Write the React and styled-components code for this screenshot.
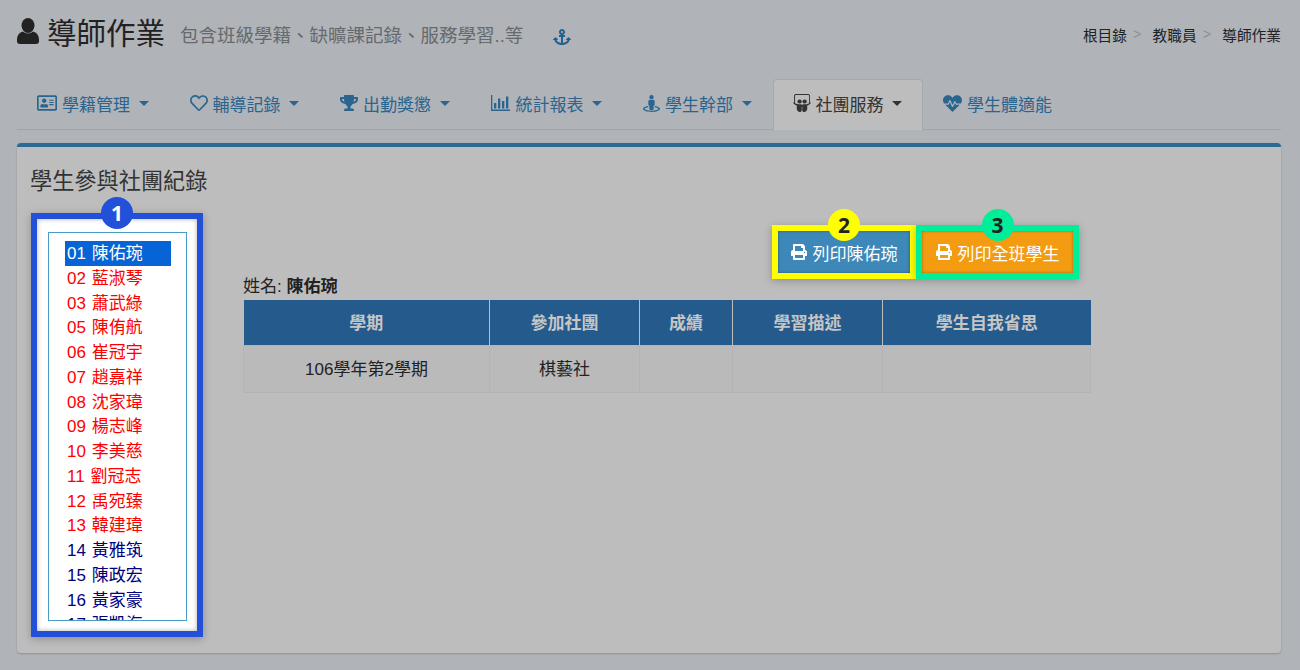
import React from 'react';
import styled, { createGlobalStyle } from 'styled-components';
import {
  FaAnchor, FaRegAddressCard, FaRegHeart, FaTrophy, FaStreetView, FaSlideshare, FaHeartbeat, FaPrint,
} from 'react-icons/fa';

const GlobalStyle = createGlobalStyle`
  html, body { margin: 0; padding: 0; height: 100%; overflow: hidden; }
  body {
    background: #b0b3b8;
    color: #222;
    font-family: "Liberation Sans", "Noto Sans CJK TC", sans-serif;
  }
`;

const Page = styled.div`
  width: 1300px;
  height: 670px;
  padding: 0 19px 0 17px;
  box-sizing: border-box;
  overflow: hidden;
`;

const Header = styled.header`
  display: flex;
  align-items: flex-start;
  justify-content: space-between;
  height: 79px;
`;

const TitleRow = styled.div`
  display: flex;
  align-items: center;
  height: 62px;
`;

const Title = styled.h1`
  margin: -1px 0 0 8px;
  font-size: 29.5px;
  font-weight: 400;
  color: #222;
`;

const Subtitle = styled.span`
  margin: 5px 0 0 15px;
  font-size: 18.5px;
  color: #666a6e;
`;

const AnchorLink = styled.span`
  display: flex;
  margin: 12px 0 0 30px;
  color: #22608f;
`;

const Breadcrumb = styled.div`
  display: flex;
  align-items: center;
  height: 68px;
  font-size: 14.7px;
  color: #222;
`;

const Sep = styled.span`
  margin: 0 11px 0 6px;
  color: #8e9094;
`;

const TabBar = styled.nav`
  display: flex;
  height: 51px;
  border-bottom: 1px solid #a2a4a6;
  box-sizing: border-box;
`;

const Tab = styled.div`
  display: flex;
  align-items: center;
  gap: 5px;
  height: 51px;
  padding: 0 20px 4px 19px;
  box-sizing: border-box;
  font-size: 17px;
  color: ${p => (p.$active ? '#333' : '#2a658f')};
  background: ${p => (p.$active ? '#bdbdbd' : 'transparent')};
  border: 1px solid ${p => (p.$active ? '#a6a8aa' : 'transparent')};
  border-bottom: 0;
  border-radius: 4px 4px 0 0;
`;

const Caret = styled.i`
  width: 0;
  height: 0;
  margin-left: 3.5px;
  border-top: 5px solid currentColor;
  border-left: 5px solid transparent;
  border-right: 5px solid transparent;
`;

const Panel = styled.main`
  height: 510px;
  margin-top: 13px;
  padding: 21px 14px 0;
  box-sizing: border-box;
  background: #bdbdbd;
  border-top: 4px solid #2a6a94;
  border-radius: 4px;
  box-shadow: 0 1px 2px rgba(0, 0, 0, .2);
`;

const PanelTitle = styled.h2`
  margin: 0 0 0 -1px;
  height: 28px;
  line-height: 28px;
  font-size: 22.2px;
  font-weight: 400;
  color: #333;
`;

const Columns = styled.div`
  display: flex;
  margin-top: 17px;
`;

const Highlight = styled.div`
  position: relative;
  box-sizing: border-box;
  border: 6px solid ${p => p.$color};
  box-shadow: 0 2px 8px rgba(0, 0, 0, .25);
`;

const Badge = styled.span`
  position: absolute;
  top: -22px;
  left: 50%;
  margin-left: -16px;
  width: 32px;
  height: 32px;
  border-radius: 50%;
  display: flex;
  align-items: center;
  justify-content: center;
  font-family: "Open Sans", sans-serif;
  font-size: 21px;
  font-weight: 700;
  background: ${p => p.$color};
  color: ${p => p.$text};
  z-index: 2;
`;

const ListFrame = styled(Highlight)`
  width: 172px;
  height: 424px;
  padding: 13px 10px 13px 11px;
  background: #fff;
  box-shadow: 0 2px 8px rgba(0, 0, 0, .25), inset 0 0 5px rgba(0, 0, 0, .3);
`;

const StudentList = styled.ul`
  height: 389px;
  margin: 0;
  padding: 8px 15px 0 16px;
  box-sizing: border-box;
  list-style: none;
  overflow: hidden;
  background: #fff;
  border: 1px solid #4a9cc8;
`;

const Student = styled.li`
  height: 24.75px;
  line-height: 25px;
  padding-left: 2px;
  font-size: 17px;
  word-spacing: 1px;
  white-space: nowrap;
  color: ${p => (p.$selected ? '#fff' : p.$done ? '#f00' : '#000080')};
  background: ${p => (p.$selected ? '#0764d6' : 'transparent')};
`;

const Content = styled.section`
  width: 848px;
  margin-left: 40px;
`;

const Actions = styled.div`
  display: flex;
  justify-content: flex-end;
  margin: 12px 12px 0 0;
`;

const PrintButton = styled.button`
  display: flex;
  align-items: center;
  justify-content: center;
  gap: 6px;
  width: 100%;
  height: 100%;
  padding: 0;
  border: 0;
  font-family: "Noto Sans CJK TC", sans-serif;
  font-size: 17px;
  color: #fff;
  background: ${p => p.$color};
  box-shadow: inset 0 0 3px rgba(0, 0, 0, .35);
`;

const ButtonFrame = styled(Highlight)`
  width: ${p => p.$width}px;
  height: 54px;
`;

const NameLine = styled.div`
  height: 21px;
  line-height: 15px;
  font-size: 17px;
  color: #222;
`;

const Table = styled.table`
  width: 847px;
  border-collapse: collapse;
  table-layout: fixed;
  font-size: 17px;
`;

const Th = styled.th`
  height: 42px;
  padding: 0 0 3px;
  background: #255b8c;
  color: #c6c6c6;
  font-weight: 700;
  border: 1px solid #bdbdbd;
  border-width: 0 1px;
  &:first-child { border-left: 0; }
  &:last-child { border-right: 0; }
`;

const Td = styled.td`
  height: 43px;
  padding: 0 0 3px;
  text-align: center;
  color: #222;
  background: #bababa;
  border: 1px solid #b4b4b4;
`;

const BarChart = () => (
  <svg width="20" height="16" viewBox="0 0 20 16" fill="currentColor">
    <path d="M0 0h1.300v14.600H19V16H0z" />
    <path d="M3 8h2.300v5.500H3zM7 3.500h2.300v10H7zM11 6h2.300v7.500H11zM15 1.500h2.300v12H15z" />
  </svg>
);

const UserIcon = () => (
  <svg width="22" height="26" viewBox="0 0 22 26" fill="#222">
    <ellipse cx="11" cy="7.500" rx="6.500" ry="7.500" />
    <path d="M0 22c0-5 2.500-7.500 6-8.500 1.300 1.300 3 2 5 2s3.700-.7 5-2c3.500 1 6 3.500 6 8.500v1.500c0 1.500-1 2.500-3 2.500H3c-2 0-3-1-3-2.500z" />
  </svg>
);

const tabs = [
  { label: '學籍管理', icon: <FaRegAddressCard size={20} />, caret: true },
  { label: '輔導記錄', icon: <FaRegHeart size={18} />, caret: true },
  { label: '出勤獎懲', icon: <FaTrophy size={18} />, caret: true },
  { label: '統計報表', icon: <BarChart />, caret: true },
  { label: '學生幹部', icon: <FaStreetView size={17} />, caret: true },
  { label: '社團服務', icon: <FaSlideshare size={18} />, caret: true, active: true },
  { label: '學生體適能', icon: <FaHeartbeat size={19} /> },
];

const students = [
  ['01', '陳佑琬', 1], ['02', '藍淑琴', 1], ['03', '蕭武綠', 1], ['05', '陳侑航', 1],
  ['06', '崔冠宇', 1], ['07', '趙嘉祥', 1], ['08', '沈家瑋', 1], ['09', '楊志峰', 1],
  ['10', '李美慈', 1], ['11', '劉冠志', 1], ['12', '禹宛臻', 1], ['13', '韓建瑋', 1],
  ['14', '黃雅筑', 0], ['15', '陳政宏', 0], ['16', '黃家豪', 0], ['17', '張凱海', 0],
];

const columns = [
  ['學期', 246], ['參加社團', 150], ['成績', 93], ['學習描述', 150], ['學生自我省思', 208],
];

export default function App() {
  return (
    <Page>
      <GlobalStyle />
      <Header>
        <TitleRow>
          <UserIcon />
          <Title>導師作業</Title>
          <Subtitle>包含班級學籍、缺曠課記錄、服務學習..等</Subtitle>
          <AnchorLink><FaAnchor size={18} /></AnchorLink>
        </TitleRow>
        <Breadcrumb>
          根目錄<Sep>&gt;</Sep>教職員<Sep>&gt;</Sep>導師作業
        </Breadcrumb>
      </Header>

      <TabBar>
        {tabs.map(t => (
          <Tab key={t.label} $active={t.active}>
            {t.icon}
            {t.label}
            {t.caret && <Caret />}
          </Tab>
        ))}
      </TabBar>

      <Panel>
        <PanelTitle>學生參與社團紀錄</PanelTitle>
        <Columns>
          <ListFrame $color="#2350d8">
            <Badge $color="#2350d8" $text="#fff">1</Badge>
            <StudentList>
              {students.map(([no, name, done], i) => (
                <Student key={no} $selected={i === 0} $done={done}>{no} {name}</Student>
              ))}
            </StudentList>
          </ListFrame>

          <Content>
            <Actions>
              <ButtonFrame $color="#ffff00" $width={144}>
                <Badge $color="#ffff00" $text="#222">2</Badge>
                <PrintButton $color="#3d88b8"><FaPrint size={16} />列印陳佑琬</PrintButton>
              </ButtonFrame>
              <ButtonFrame $color="#00ee99" $width={163}>
                <Badge $color="#00ee99" $text="#222">3</Badge>
                <PrintButton $color="#f39c12"><FaPrint size={16} />列印全班學生</PrintButton>
              </ButtonFrame>
            </Actions>
            <NameLine>姓名: <b>陳佑琬</b></NameLine>
            <Table>
              <colgroup>
                {columns.map(([label, w]) => <col key={label} width={w} />)}
              </colgroup>
              <thead>
                <tr>{columns.map(([label]) => <Th key={label}>{label}</Th>)}</tr>
              </thead>
              <tbody>
                <tr>
                  <Td>106學年第2學期</Td>
                  <Td>棋藝社</Td>
                  <Td />
                  <Td />
                  <Td />
                </tr>
              </tbody>
            </Table>
          </Content>
        </Columns>
      </Panel>
    </Page>
  );
}
